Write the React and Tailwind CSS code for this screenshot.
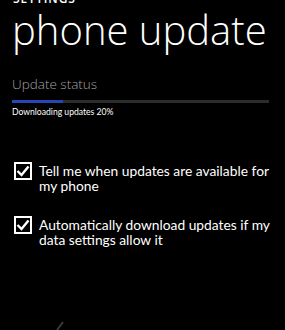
import React from "react";

function Check() {
    return (
        <div className="w-[18px] h-[18px] border-2 border-white flex items-center justify-center shrink-0">
            <svg width="14" height="14" viewBox="0 0 14 14">
                <polyline points="1.5,7 5.5,11 12.5,2.5" fill="none" stroke="white" strokeWidth="2.4" />
            </svg>
        </div>
    );
}

function Option({ children }) {
    return (
        <div className="flex items-start">
            <Check />
            <div
                className="ml-[7px] mt-[2px] text-[13.8px] leading-[14.5px] text-white whitespace-nowrap"
                style={{ fontFamily: "Lato, sans-serif" }}
            >
                {children}
            </div>
        </div>
    );
}

export default function App() {
    return (
        <div
            className="w-[285px] h-[330px] bg-black overflow-hidden relative pl-[12px]"
            style={{ fontFamily: '"Open Sans", "Noto Sans", sans-serif' }}
        >
            {/* header */}
            <div className="mt-[-7px] h-[12px] text-[12px] leading-[12px] font-semibold text-white tracking-[0.08em] pl-[1px]">SETTINGS</div>
            <div className="mt-[5px] h-[40px] text-[40px] leading-[40px] font-light text-white whitespace-nowrap">phone update</div>

            {/* status */}
            <div className="mt-[27px] h-[14px] text-[13.5px] leading-[14px] font-light text-[#a0a0a0]">Update status</div>
            <div className="mt-[9px] w-[257px] h-[3px] bg-[#2c2c2c] flex">
                <div className="w-[20%] h-full bg-[#2745b8]" />
            </div>
            <div
                className="mt-[4px] h-[10px] text-[8.6px] leading-[10px] text-white"
                style={{ fontFamily: "Lato, sans-serif" }}
            >
                Downloading updates 20%
            </div>

            {/* options */}
            <div className="mt-[45px] flex flex-col gap-[23px] pl-[2px]">
                <Option>
                    Tell me when updates are available for
                    <br />
                    my phone
                </Option>
                <Option>
                    Automatically download updates if my
                    <br />
                    data settings allow it
                </Option>
            </div>

            <svg className="absolute left-[55px] top-[320px]" width="10" height="10" viewBox="0 0 10 10">
                <line x1="2" y1="10" x2="8" y2="2" stroke="#3a3a3a" strokeWidth="2" />
            </svg>
        </div>
    );
}
